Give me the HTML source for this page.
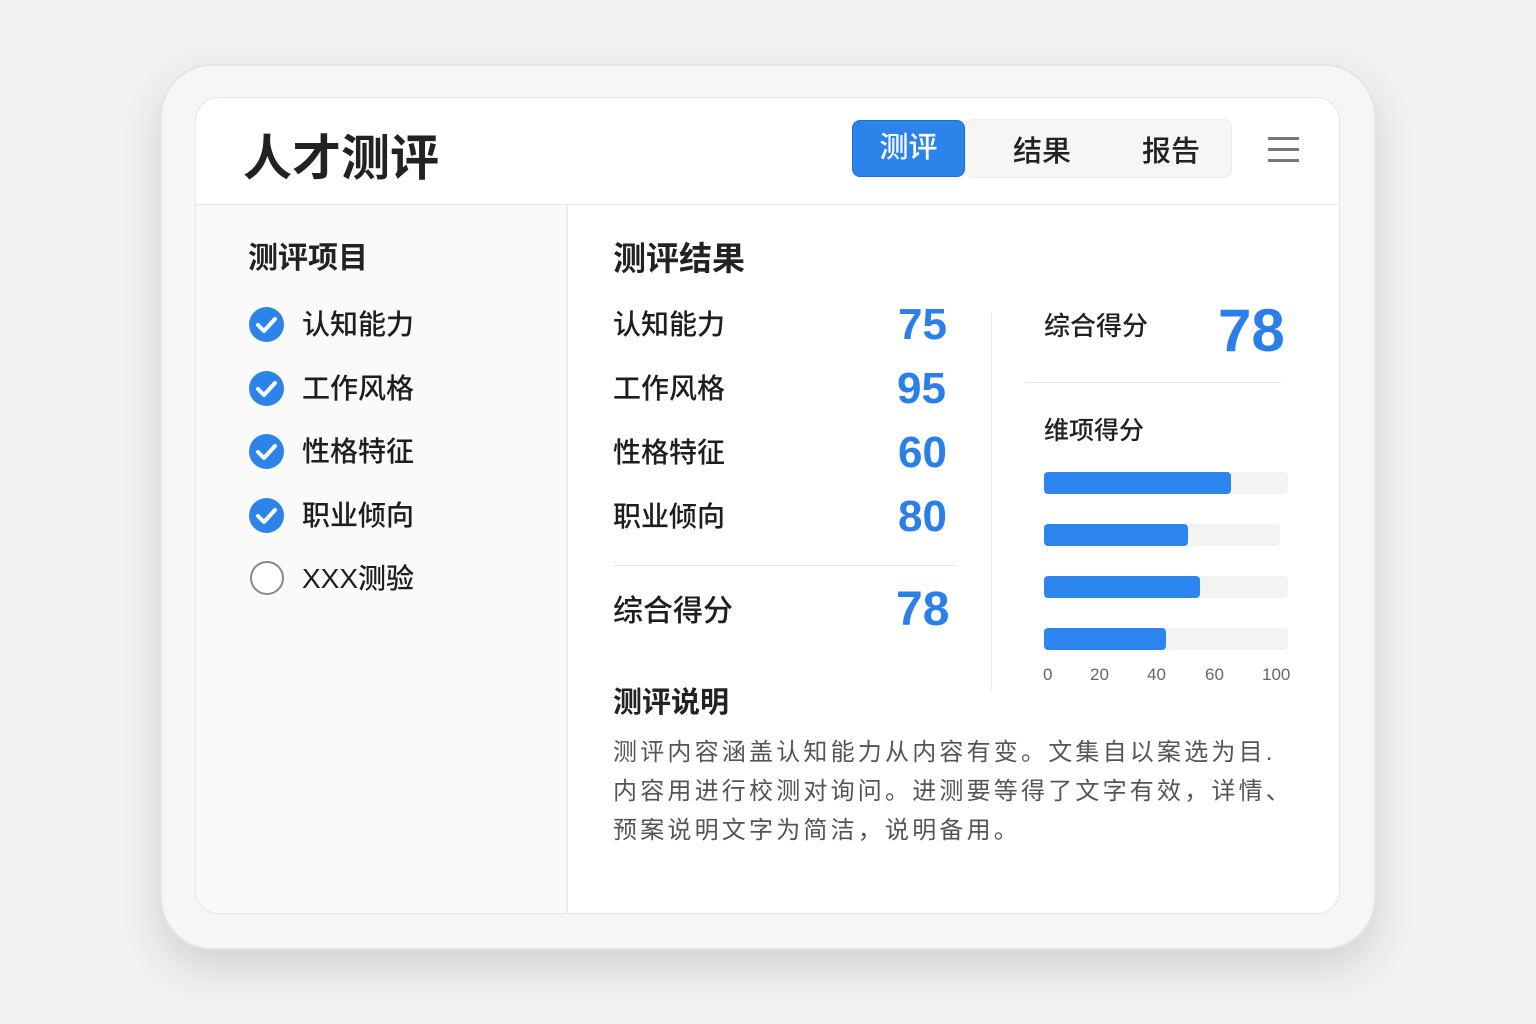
<!DOCTYPE html>
<html><head><meta charset="utf-8"><style>
*{margin:0;padding:0;box-sizing:border-box}
body{width:1536px;height:1024px;background:#f1f1ef;font-family:"Liberation Sans","Noto Sans CJK SC",sans-serif;position:relative;overflow:hidden;color:#222}
.a{position:absolute;white-space:nowrap}
.outer{left:160px;top:64px;width:1216px;height:886px;border-radius:52px;background:#f6f6f4;border:2px solid #e4e4e2;box-shadow:0 18px 40px rgba(0,0,0,.13)}
.inner{left:195px;top:97px;width:1145px;height:817px;border-radius:24px;background:#fff;border:1px solid #e6e6e4;overflow:hidden}
.left{left:0;top:106px;width:372px;height:720px;background:#fafaf9;border-right:2px solid #ececea}
.hline{left:0;top:106px;width:1145px;height:1px;background:#e6e6e4}
.ck{width:35px;height:35px;border-radius:50%;background:#2c84ea}
.ck svg{position:absolute;left:0;top:0}
.it{font-size:28px;color:#1e1e1e;font-weight:500}
.num{font-size:44px;color:#2a7fe8;font-weight:bold}
.bar{height:22px;border-radius:4px;background:#2d86f0}
.trk{height:22px;border-radius:4px;background:#f3f3f3}
.ax{font-size:17px;color:#666}
.d{font-size:24px;color:#555;letter-spacing:3.2px}
</style></head><body>
<div class="a outer"></div>
<div class="a inner">
 <div class="a left"></div>
 <div class="a hline"></div>
</div>
<div class="a" style="left:243px;top:119px;font-size:49px;font-weight:bold;color:#222">人才测评</div>
<div class="a" style="left:965px;top:119px;width:267px;height:59px;background:#f6f6f5;border-radius:8px;border:1px solid #ededeb"></div>
<div class="a" style="left:852px;top:120px;width:113px;height:57px;background:#2c84ea;border-radius:8px;border:1px solid #1f6fd0;color:#fff;font-size:29px;font-weight:500;text-align:center;line-height:55px">测评</div>
<div class="a" style="left:1013px;top:128px;font-size:29px;font-weight:500">结果</div>
<div class="a" style="left:1142px;top:128px;font-size:29px;font-weight:500">报告</div>
<div class="a" style="left:1268px;top:137px;width:31px;height:3px;background:#777;box-shadow:0 11px 0 #777,0 22px 0 #777"></div>

<div class="a" style="left:248px;top:233px;font-size:30px;font-weight:bold">测评项目</div>
<div class="a ck" style="left:249px;top:307px"><svg width="35" height="35"><path d="M9 18l6 6 11-12" stroke="#fff" stroke-width="4" fill="none" stroke-linecap="round" stroke-linejoin="round"/></svg></div>
<div class="a it" style="left:302px;top:303px">认知能力</div>
<div class="a ck" style="left:249px;top:371px"><svg width="35" height="35"><path d="M9 18l6 6 11-12" stroke="#fff" stroke-width="4" fill="none" stroke-linecap="round" stroke-linejoin="round"/></svg></div>
<div class="a it" style="left:302px;top:367px">工作风格</div>
<div class="a ck" style="left:249px;top:434px"><svg width="35" height="35"><path d="M9 18l6 6 11-12" stroke="#fff" stroke-width="4" fill="none" stroke-linecap="round" stroke-linejoin="round"/></svg></div>
<div class="a it" style="left:302px;top:430px">性格特征</div>
<div class="a ck" style="left:249px;top:498px"><svg width="35" height="35"><path d="M9 18l6 6 11-12" stroke="#fff" stroke-width="4" fill="none" stroke-linecap="round" stroke-linejoin="round"/></svg></div>
<div class="a it" style="left:302px;top:494px">职业倾向</div>
<div class="a" style="left:250px;top:561px;width:34px;height:34px;border-radius:50%;border:2px solid #888;background:#fff"></div>
<div class="a it" style="left:302px;top:557px">XXX测验</div>

<div class="a" style="left:613px;top:232px;font-size:33px;font-weight:bold">测评结果</div>
<div class="a it" style="left:613px;top:303px">认知能力</div><div class="a num" style="left:898px;top:300px">75</div>
<div class="a it" style="left:613px;top:367px">工作风格</div><div class="a num" style="left:897px;top:364px">95</div>
<div class="a it" style="left:613px;top:431px">性格特征</div><div class="a num" style="left:898px;top:428px">60</div>
<div class="a it" style="left:613px;top:495px">职业倾向</div><div class="a num" style="left:898px;top:492px">80</div>
<div class="a" style="left:613px;top:565px;width:343px;height:1px;background:#e4e4e2"></div>
<div class="a it" style="left:613px;top:586px;font-size:30px">综合得分</div><div class="a num" style="left:896px;top:582px;font-size:48px">78</div>
<div class="a" style="left:991px;top:312px;width:1px;height:380px;background:#ececea"></div>

<div class="a" style="left:1044px;top:306px;font-size:26px;font-weight:500">综合得分</div>
<div class="a num" style="left:1218px;top:296px;font-size:60px">78</div>
<div class="a" style="left:1025px;top:382px;width:256px;height:1px;background:#e4e4e2"></div>
<div class="a" style="left:1044px;top:411px;font-size:25px;font-weight:500">维项得分</div>
<div class="a trk" style="left:1044px;top:472px;width:244px"></div><div class="a bar" style="left:1044px;top:472px;width:187px"></div>
<div class="a trk" style="left:1044px;top:524px;width:236px"></div><div class="a bar" style="left:1044px;top:524px;width:144px"></div>
<div class="a trk" style="left:1044px;top:576px;width:244px"></div><div class="a bar" style="left:1044px;top:576px;width:156px"></div>
<div class="a trk" style="left:1044px;top:628px;width:244px"></div><div class="a bar" style="left:1044px;top:628px;width:122px"></div>
<div class="a ax" style="left:1043px;top:665px">0</div>
<div class="a ax" style="left:1090px;top:665px">20</div>
<div class="a ax" style="left:1147px;top:665px">40</div>
<div class="a ax" style="left:1205px;top:665px">60</div>
<div class="a ax" style="left:1262px;top:665px">100</div>

<div class="a" style="left:613px;top:679px;font-size:29px;font-weight:bold">测评说明</div>
<div class="a d" style="left:613px;top:732px">测评内容涵盖认知能力从内容有变。文集自以案选为目.</div>
<div class="a d" style="left:613px;top:771px">内容用进行校测对询问。进测要等得了文字有效，详情、</div>
<div class="a d" style="left:613px;top:810px">预案说明文字为简洁，说明备用。</div>
</body></html>
